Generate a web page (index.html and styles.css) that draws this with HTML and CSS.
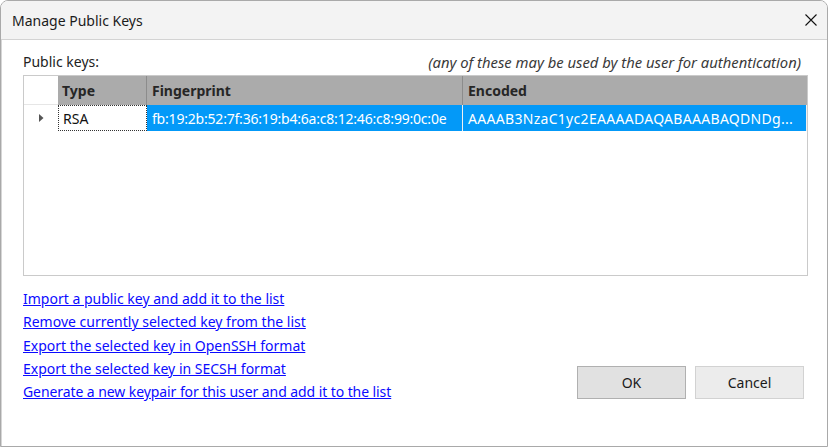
FILE: index.html
```html
<!DOCTYPE html>
<html>
<head>
<meta charset="utf-8">
<link rel="stylesheet" href="styles.css">
</head>
<body>
<div class="window">
  <div class="titlebar">
    <span class="title">Manage Public Keys</span>
    <svg class="close" width="12" height="12" viewBox="0 0 12 12"><path d="M0.5 0.5 L11.5 11.5 M11.5 0.5 L0.5 11.5" stroke="#111" stroke-width="1.1" fill="none"/></svg>
  </div>
  <div class="client">
    <div class="labels">
      <span class="label">Public keys:</span>
      <span class="note">(any of these may be used by the user for authentication)</span>
    </div>
    <div class="grid">
      <div class="row head">
        <div class="cell rh"></div>
        <div class="cell c-type">Type</div>
        <div class="cell c-fp">Fingerprint</div>
        <div class="cell c-enc">Encoded</div>
      </div>
      <div class="row data">
        <div class="cell rh"><svg width="5" height="8" viewBox="0 0 5 8"><path d="M0 0 L4.5 4 L0 8 Z" fill="#555"/></svg></div>
        <div class="cell c-type focus">RSA</div>
        <div class="cell c-fp sel fp-text">fb:19:2b:52:7f:36:19:b4:6a:c8:12:46:c8:99:0c:0e</div>
        <div class="cell c-enc sel enc-text">AAAAB3NzaC1yc2EAAAADAQABAAABAQDNDg...</div>
      </div>
    </div>
    <div class="bottom">
      <div class="links">
        <a class="link" href="#">Import a public key and add it to the list</a>
        <a class="link" href="#">Remove currently selected key from the list</a>
        <a class="link" href="#">Export the selected key in OpenSSH format</a>
        <a class="link" href="#">Export the selected key in SECSH format</a>
        <a class="link" href="#">Generate a new keypair for this user and add it to the list</a>
      </div>
      <div class="buttons">
        <button class="btn default">OK</button>
        <button class="btn">Cancel</button>
      </div>
    </div>
  </div>
</div>
</body>
</html>
```

FILE: styles.css
```css
html, body {
  margin: 0;
  padding: 0;
  background: #ffffff;
}
body {
  font-family: "Noto Sans", "Open Sans", sans-serif;
  font-size: 14px;
  color: #1a1a1a;
}
.window {
  width: 828px;
  height: 447px;
  box-sizing: border-box;
  border: 1px solid #a9a9a9;
  border-radius: 8px 8px 0 0;
  overflow: hidden;
  display: flex;
  flex-direction: column;
  background: #fff;
}
.titlebar {
  height: 38px;
  flex: none;
  background: #f3f3f3;
  border-bottom: 1px solid #d3d3d3;
  display: flex;
  align-items: center;
  justify-content: space-between;
  padding: 0 10px 0 11px;
}
.title {
  font-size: 14px;
  color: #1b1b1b;
  padding-top: 1px;
}
.close {
  display: block;
}
.client {
  flex: 1;
  border-left: 1px solid #d6d6d6;
  padding: 13px 19px 0 21px;
  display: flex;
  flex-direction: column;
}
.labels {
  display: flex;
  justify-content: space-between;
  align-items: center;
  line-height: 18px;
  height: 18px;
  padding-right: 7px;
}
.label {
  color: #222;
}
.note {
  font-style: italic;
  font-size: 14.8px;
  color: #3a3a3a;
}
.grid {
  margin-top: 4px;
  height: 201px;
  box-sizing: border-box;
  border: 1px solid #cacaca;
  display: flex;
  flex-direction: column;
}
.row {
  display: flex;
}
.row.head {
  height: 29px;
  background: #ababab;
}
.row.data {
  height: 26px;
}
.cell {
  box-sizing: border-box;
  display: flex;
  align-items: center;
  padding-left: 5px;
  white-space: nowrap;
  overflow: hidden;
}
.cell.rh {
  width: 34px;
  flex: none;
  background: #fff;
  justify-content: center;
  padding-left: 0;
}
.head .cell.rh {
  border-bottom: 1px solid #e6e6e6;
}
.data .cell.rh {
  justify-content: flex-start;
  padding-left: 15px;
}
.c-type {
  width: 89px;
  flex: none;
  border-right: 1px solid #8c8c8c;
}
.c-fp {
  width: 316px;
  flex: none;
  border-right: 1px solid #8c8c8c;
}
.c-enc {
  flex: 1;
}
.head .cell {
  font-weight: bold;
  color: #262626;
}
.head .cell.c-type { padding-left: 4px; }
.data .cell {
  border-right: 1px solid #f0f0f0;
}
.data .cell.rh { border-right: none; }
.cell.focus {
  border: 1px dotted #333;
  background: #fff;
  color: #111;
  padding-left: 4px;
}
.cell.sel {
  background: #0399f8;
  color: #ffffff;
}
.fp-text {
  letter-spacing: -0.2px;
}
.enc-text {
  letter-spacing: 0.3px;
}
.bottom {
  flex: 1;
  display: flex;
  justify-content: space-between;
  align-items: flex-start;
  padding-top: 11px;
}
.links {
  display: flex;
  flex-direction: column;
}
.link {
  display: block;
  color: #0b0bff;
  text-decoration: underline;
  line-height: 23.25px;
  height: 23.25px;
}
.links .link:last-child {
  letter-spacing: -0.08px;
}
.buttons {
  display: flex;
  gap: 9px;
  margin-top: 79px;
  padding-right: 4px;
}
.btn {
  width: 109px;
  height: 33px;
  font-family: "Noto Sans", "Open Sans", sans-serif;
  font-size: 14px;
  color: #1a1a1a;
  background: #ececec;
  border: 1px solid #d2d2d2;
  border-radius: 0;
  padding: 0;
}
.btn.default {
  background: #e1e1e1;
  border: 1px solid #b0b0b0;
}
```
